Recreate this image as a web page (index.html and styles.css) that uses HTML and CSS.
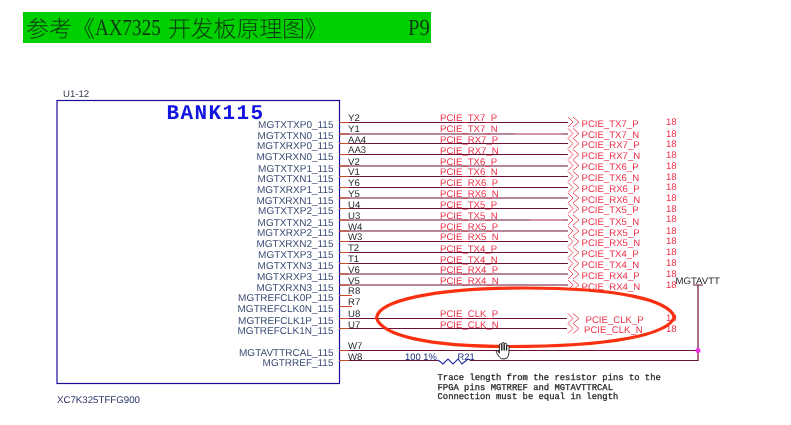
FILE: index.html
```html
<!DOCTYPE html>
<html lang="zh">
<head>
<meta charset="utf-8">
<title>BANK115</title>
<link rel="stylesheet" href="styles.css">
</head>
<body>
<main class="page">
  <header class="title-bar">
    <h1 class="title"><span>参考《</span><span class="latin latin-part">AX7325</span><span class="title-cjk">开发板原理图》</span></h1>
    <span class="latin page-no">P9</span>
  </header>
  <svg class="schematic" viewBox="0 43 791 382" width="791" height="382">
    <defs>
      <path id="chev" d="M568 -5l5 5l-5 5M573 -5l6 5l-6 5"/>
    </defs>

    <rect class="symbol-box" x="57" y="100.5" width="282.5" height="283"/>
    <text class="ref" x="63" y="97">U1-12</text>
    <text class="bank" x="166.5" y="119">BANK115</text>
    <text class="part" x="57" y="403">XC7K325TFFG900</text>

    <path class="wire" d="M339 122.5H568M339 134H568M339 143.5H568M339 154.5H568M339 166H568M339 176.5H568M339 187.5H568M339 198H568M339 208.5H568M339 220H568M339 231H568M339 241.5H568M339 252.5H568M339 263.5H568M339 274H568M339 285H568M339 318.5H567M339 328.5H567M339 350.5H698M339 360.5H438M470 360.5H698V285M693 285H703"/>
    <path class="wire-stub" d="M339 122.5H349M339 134H349M339 143.5H349M339 154.5H349M339 166H349M339 176.5H349M339 187.5H349M339 198H349M339 208.5H349M339 220H349M339 231H349M339 241.5H349M339 252.5H349M339 263.5H349M339 274H349M339 285H349M339 295.5H352M339 306.5H352M339 318.5H349M339 328.5H349M339 350.5H349M339 360.5H349"/>
    <path class="wire-faded" d="M515 134H563M531 220H563"/>
    <path class="resistor" d="M438 360L443 364L448 359L453 364L458 359L462 364L468 359L470 360"/>
    <circle class="junction" cx="698" cy="350.5" r="2.5"/>

    <g class="pin-label">
      <text x="333.5" y="128">MGTXTXP0_115</text>
      <text x="333.5" y="139">MGTXTXN0_115</text>
      <text x="333.5" y="149">MGTXRXP0_115</text>
      <text x="333.5" y="159.5">MGTXRXN0_115</text>
      <text x="333.5" y="172">MGTXTXP1_115</text>
      <text x="333.5" y="182">MGTXTXN1_115</text>
      <text x="333.5" y="193">MGTXRXP1_115</text>
      <text x="333.5" y="204">MGTXRXN1_115</text>
      <text x="333.5" y="214">MGTXTXP2_115</text>
      <text x="333.5" y="226">MGTXTXN2_115</text>
      <text x="333.5" y="236">MGTXRXP2_115</text>
      <text x="333.5" y="247">MGTXRXN2_115</text>
      <text x="333.5" y="258">MGTXTXP3_115</text>
      <text x="333.5" y="269">MGTXTXN3_115</text>
      <text x="333.5" y="280">MGTXRXP3_115</text>
      <text x="333.5" y="291">MGTXRXN3_115</text>
      <text x="333.5" y="301">MGTREFCLK0P_115</text>
      <text x="333.5" y="312">MGTREFCLK0N_115</text>
      <text x="333.5" y="324">MGTREFCLK1P_115</text>
      <text x="333.5" y="334">MGTREFCLK1N_115</text>
      <text x="333.5" y="356">MGTAVTTRCAL_115</text>
      <text x="333.5" y="366">MGTRREF_115</text>
    </g>

    <g class="pin-number">
      <text x="348" y="121">Y2</text>
      <text x="348" y="132">Y1</text>
      <text x="348" y="143">AA4</text>
      <text x="348" y="153">AA3</text>
      <text x="348" y="164.5">V2</text>
      <text x="348" y="175">V1</text>
      <text x="348" y="185.5">Y6</text>
      <text x="348" y="196.5">Y5</text>
      <text x="348" y="208">U4</text>
      <text x="348" y="219">U3</text>
      <text x="348" y="230">W4</text>
      <text x="348" y="240">W3</text>
      <text x="348" y="251">T2</text>
      <text x="348" y="262">T1</text>
      <text x="348" y="273">V6</text>
      <text x="348" y="284">V5</text>
      <text x="348" y="294">R8</text>
      <text x="348" y="305">R7</text>
      <text x="348" y="317">U8</text>
      <text x="348" y="328">U7</text>
      <text x="348" y="349">W7</text>
      <text x="348" y="360">W8</text>
    </g>

    <g class="net">
      <text x="440" y="121">PCIE_TX7_P</text>
      <text x="440" y="132">PCIE_TX7_N</text>
      <text x="440" y="143">PCIE_RX7_P</text>
      <text x="440" y="154">PCIE_RX7_N</text>
      <text x="440" y="165">PCIE_TX6_P</text>
      <text x="440" y="175">PCIE_TX6_N</text>
      <text x="440" y="186">PCIE_RX6_P</text>
      <text x="440" y="196.5">PCIE_RX6_N</text>
      <text x="440" y="208">PCIE_TX5_P</text>
      <text x="440" y="219">PCIE_TX5_N</text>
      <text x="440" y="230">PCIE_RX5_P</text>
      <text x="440" y="240">PCIE_RX5_N</text>
      <text x="440" y="252">PCIE_TX4_P</text>
      <text x="440" y="263">PCIE_TX4_N</text>
      <text x="440" y="273">PCIE_RX4_P</text>
      <text x="440" y="284">PCIE_RX4_N</text>
      <text x="440" y="317">PCIE_CLK_P</text>
      <text x="440" y="328">PCIE_CLK_N</text>
    </g>

    <g class="chevrons">
      <use href="#chev" y="122"/>
      <use href="#chev" y="133.5"/>
      <use href="#chev" y="143.5"/>
      <use href="#chev" y="154.5"/>
      <use href="#chev" y="165.5"/>
      <use href="#chev" y="176.5"/>
      <use href="#chev" y="187.5"/>
      <use href="#chev" y="198"/>
      <use href="#chev" y="208.5"/>
      <use href="#chev" y="220"/>
      <use href="#chev" y="231"/>
      <use href="#chev" y="241.5"/>
      <use href="#chev" y="252.5"/>
      <use href="#chev" y="263.5"/>
      <use href="#chev" y="274"/>
      <use href="#chev" y="285"/>
      <use href="#chev" y="318.5"/>
      <use href="#chev" y="328.5"/>
    </g>

    <g class="net">
      <text x="581.5" y="126.5">PCIE_TX7_P</text>
      <text x="581.5" y="138">PCIE_TX7_N</text>
      <text x="581.5" y="148">PCIE_RX7_P</text>
      <text x="581.5" y="159">PCIE_RX7_N</text>
      <text x="581.5" y="170">PCIE_TX6_P</text>
      <text x="581.5" y="181">PCIE_TX6_N</text>
      <text x="581.5" y="192">PCIE_RX6_P</text>
      <text x="581.5" y="203">PCIE_RX6_N</text>
      <text x="581.5" y="213">PCIE_TX5_P</text>
      <text x="581.5" y="225">PCIE_TX5_N</text>
      <text x="581.5" y="235.5">PCIE_RX5_P</text>
      <text x="581.5" y="246">PCIE_RX5_N</text>
      <text x="581.5" y="257">PCIE_TX4_P</text>
      <text x="581.5" y="268">PCIE_TX4_N</text>
      <text x="581.5" y="279">PCIE_RX4_P</text>
      <text x="581.5" y="290">PCIE_RX4_N</text>
      <text x="585.5" y="323">PCIE_CLK_P</text>
      <text x="584" y="333">PCIE_CLK_N</text>
    </g>

    <g class="net">
      <text x="666" y="124.5">18</text>
      <text x="666" y="137">18</text>
      <text x="666" y="147">18</text>
      <text x="666" y="158">18</text>
      <text x="666" y="169">18</text>
      <text x="666" y="180">18</text>
      <text x="666" y="190">18</text>
      <text x="666" y="201">18</text>
      <text x="666" y="212">18</text>
      <text x="666" y="222">18</text>
      <text x="666" y="234">18</text>
      <text x="666" y="244">18</text>
      <text x="666" y="255">18</text>
      <text x="666" y="266">18</text>
      <text x="666" y="277">18</text>
      <text x="666" y="288">18</text>
      <text x="666" y="321">18</text>
      <text x="666" y="332">18</text>
    </g>

    <text class="power" x="675.5" y="284">MGTAVTT</text>
    <text class="value" x="405" y="360">100 1%</text>
    <text class="value" x="457.5" y="360">R21</text>

    <g class="note">
      <text x="437.5" y="379.5">Trace length from the resistor pins to the</text>
      <text x="437.5" y="389.5">FPGA pins MGTRREF and MGTAVTTRCAL</text>
      <text x="437.5" y="399">Connection must be equal in length</text>
    </g>

    <path class="callout" d="M376.5 318C378 301 432 288 525 288C620 288 668 300 674.5 317C668 335 610 346.5 510 346.5C425 346.5 382 335 376.5 318Z"/>
    <path class="hand" transform="translate(511 342) scale(-1 1)" d="M2 10.5V4.6a1.2 1.2 0 0 1 2.4 0V8.5V2.4a1.2 1.2 0 0 1 2.4 0V8.5V1.8a1.2 1.2 0 0 1 2.4 0V8.5V3a1.2 1.2 0 0 1 2.4 0V11.2L13 9a1.1 1.1 0 0 1 1.6 1.4L11.6 15.2Q10.2 17 7 17Q3.6 17 2.8 14Z"/>
  </svg>
</main>
</body>
</html>
```
FILE: styles.css
```css
html, body {
  margin: 0;
  padding: 0;
  background: #fff;
}

.page {
  width: 791px;
  height: 425px;
  overflow: hidden;
  filter: blur(0.3px);
  text-rendering: geometricPrecision;
}

.title-bar {
  display: flex;
  justify-content: space-between;
  align-items: center;
  box-sizing: border-box;
  width: 408px;
  height: 31px;
  margin: 12px 0 0 23px;
  padding: 0 1px 0 3px;
  background: #00d000;
  color: #0c3a10;
  font-family: "Noto Sans CJK SC", sans-serif;
  font-size: 23px;
  font-weight: 300;
  line-height: 31px;
  white-space: nowrap;
}

.title {
  margin: 0;
  font: inherit;
  display: flex;
}

.latin {
  display: inline-block;
  font-family: "Liberation Serif", serif;
  font-size: 23px;
  font-weight: 400;
  transform-origin: left center;
}

.latin-part {
  width: 66px;
  margin-right: 7px;
  transform: scaleX(0.83);
}

.title-cjk {
  letter-spacing: -0.2px;
}

.page-no {
  width: 22px;
  transform: scaleX(0.9);
}

.schematic {
  display: block;
  font-family: "Liberation Sans", sans-serif;
}

.symbol-box {
  fill: #fff;
  stroke: #1c0c9c;
  stroke-width: 1.2;
}

.ref {
  font-size: 9.6px;
  fill: #333a50;
}

.bank {
  font-family: "Liberation Mono", monospace;
  font-size: 21px;
  font-weight: 700;
  letter-spacing: 1.4px;
  fill: #1414e0;
}

.part {
  font-size: 9.7px;
  fill: #2c3468;
}

.wire {
  fill: none;
  stroke: #6c1034;
  stroke-width: 1.2;
}

.wire-stub {
  fill: none;
  stroke: #c84a30;
  stroke-width: 1.2;
}

.wire-faded {
  fill: none;
  stroke: #f2a0b0;
  stroke-width: 1.2;
}

.resistor {
  fill: none;
  stroke: #2030a0;
  stroke-width: 1.1;
}

.junction {
  fill: #f030e0;
}

.pin-label text {
  font-size: 10px;
  text-anchor: end;
  fill: #3a4c74;
}

.pin-number text {
  font-size: 9.6px;
  fill: #252a30;
}

.net text {
  font-size: 9.6px;
  fill: #ee3048;
}

.chevrons {
  fill: none;
  stroke: #f05868;
  stroke-width: 1;
}

.power {
  font-size: 9.6px;
  fill: #1c1c24;
}

.value {
  font-size: 9.4px;
  fill: #1c2c80;
}

.note text {
  font-family: "Liberation Mono", monospace;
  font-size: 8.87px;
  fill: #1c1c1c;
  stroke: #1c1c1c;
  stroke-width: 0.25;
}

.callout {
  fill: none;
  stroke: #fa3010;
  stroke-width: 3.2;
}

.hand {
  fill: #fff;
  stroke: #111;
  stroke-width: 0.9;
  stroke-linejoin: round;
}
```
